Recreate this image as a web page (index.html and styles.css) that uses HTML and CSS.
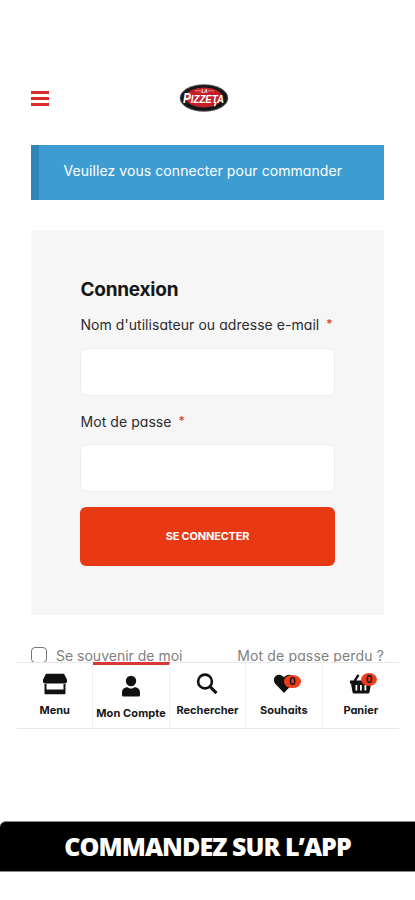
FILE: index.html
```html
<!DOCTYPE html>
<html lang="fr">
<head>
<meta charset="utf-8">
<meta name="viewport" content="width=device-width, initial-scale=1">
<title>Connexion</title>
<link rel="stylesheet" href="styles.css">
</head>
<body>
<div class="screen">
  <header class="header">
    <button class="burger" aria-label="Ouvrir"><span></span><span></span><span></span></button>
    <svg class="logo" viewBox="0 0 50 28">
      <ellipse cx="25" cy="14" rx="24.3" ry="13.8" fill="#555"/>
      <ellipse cx="25" cy="14" rx="23.300" ry="12.8" fill="#151515"/>
      <ellipse cx="25" cy="13.500" rx="18.500" ry="10" fill="#c4202a"/>
      <path d="M16 6.800h6M29 6.800h6" stroke="#e9a0a0" stroke-width=".8"/>
      <text class="logo-small" x="25.5" y="8.6" text-anchor="middle">LA</text>
      <text class="logo-name" x="4" y="19" textLength="41" lengthAdjust="spacingAndGlyphs"><tspan class="logo-initial">P</tspan>IZZETA</text>
      <path d="M37 18l-1.500 4.300" stroke="#fff" stroke-width="1.500"/>
    </svg>
  </header>
  <p class="notice"><span>Veuillez vous connecter pour commander</span></p>
  <form class="card">
    <h1>Connexion</h1>
    <label for="user"><span class="user-label">Nom d'utilisateur ou adresse e-mail</span><b>*</b></label>
    <input id="user" type="text">
    <label class="second" for="pass"><span class="pass-label">Mot de passe</span><b>*</b></label>
    <input id="pass" type="password">
    <button type="button" class="submit"><span>SE CONNECTER</span></button>
  </form>
  <div class="options">
    <span class="remember"><i class="check"></i><span class="remember-text">Se souvenir de moi</span></span>
    <a class="lost">Mot de passe perdu ?</a>
  </div>
  <nav class="tabs">
    <a class="tab">
      <svg viewBox="0 0 26 22"><path d="M4 .8h18l3 5.700V8.500Q25 10.500 23 10.500H3Q1 10.500 1 8.500V6.500z"/><path d="M2.500 11h2v5.500h17V11h2v9.500q0 .8-.8.8H3.300q-.8 0-.8-.8z"/></svg>
      <span class="t-menu">Menu</span>
    </a>
    <a class="tab active">
      <svg viewBox="0 0 26 22"><circle cx="13" cy="6" r="5.200"/><path d="M4 20v-2c0-3.500 2-5.700 5.300-5.700 1.400.9 2.500 1.200 3.700 1.200s2.300-.3 3.700-1.200c3.300 0 5.300 2.200 5.300 5.700v2q0 1.500-1.500 1.500h-15Q4 21.500 4 20z"/></svg>
      <span class="t-account">Mon Compte</span>
    </a>
    <a class="tab">
      <svg viewBox="0 0 26 22"><circle cx="11" cy="8.500" r="6.900" fill="none" stroke="#111" stroke-width="2.600"/><path d="M15.800 13.400l6.700 6.700" fill="none" stroke="#111" stroke-width="3"/></svg>
      <span class="t-search">Rechercher</span>
    </a>
    <a class="tab">
      <svg viewBox="0 0 26 22"><path d="M13 20L4.900 11.500C2.300 8.700 2.300 5 4.700 3c2.500-2.100 6-1.500 8.300 1.200 2.300-2.700 5.800-3.300 8.300-1.200 2.400 2 2.400 5.700-.2 8.500z"/></svg>
      <em class="badge">0</em>
      <span class="t-wish">Souhaits</span>
    </a>
    <a class="tab">
      <svg viewBox="0 0 26 22"><path fill-rule="evenodd" d="M2 7.500h3.500L9.500 1.200l2 1.200L8.300 7.500H24v3h-1l-1.500 8.700q-.3 1.300-1.500 1.300H6q-1.200 0-1.500-1.300L3 10.500H2zM7.500 12v5.500h1.800V12zm4.500 0v5.500h1.800V12zm4.500 0v5.500h1.800V12z"/></svg>
      <em class="badge cart">0</em>
      <span class="t-cart">Panier</span>
    </a>
  </nav>
  <footer class="banner"><span>COMMANDEZ SUR L’APP</span></footer>
</div>
</body>
</html>
```
FILE: styles.css
```css
* { box-sizing: border-box; }
body {
  margin: 0;
  background: #fff;
  color: #161616;
  font-family: Inter, "Open Sans", sans-serif;
  font-feature-settings: "cv11" 1;
}
.screen { height: 900px; overflow: hidden; display: flex; flex-direction: column; }
.screen span { white-space: nowrap; }
.header {
  height: 145px;
  flex: none;
  padding: 84px 32px 0 31px;
  display: grid;
  grid-template-columns: 147.5px 50px 1fr;
  align-items: start;
}
.burger {
  width: 18px;
  margin-top: 7px;
  padding: 0;
  border: 0;
  background: none;
  display: grid;
  gap: 3.5px;
}
.burger span { height: 2.7px; background: #d92c2c; }
.logo { width: 50px; height: 28px; overflow: visible; }
.logo text { font-family: "Liberation Sans", sans-serif; font-weight: 700; font-style: italic; fill: #fff; }
.logo .logo-small { font-size: 4.5px; }
.logo .logo-name { font-size: 11.5px; }
.logo .logo-initial { font-size: 14px; }
.notice {
  margin: 0 31px;
  height: 55px;
  flex: none;
  padding-left: 24.5px;
  border-left: 8px solid #2f85b5;
  background: #3d9cd2;
  color: #fff;
  font-size: 14px;
  line-height: 52px;
}
.notice span { letter-spacing: .07px; }
.card {
  margin: 30px 31px 0;
  height: 385px;
  flex: none;
  padding: 48px 49px 0;
  background: #f6f6f6;
}
h1 { margin: 0; padding-left: .5px; font-size: 19px; line-height: 23px; font-weight: 700; letter-spacing: -.25px; }
label { display: flex; gap: 7px; height: 47px; padding: 13px 0 0 .5px; font-size: 14px; line-height: 22px; color: #2c2c2c; }
label.second { padding-top: 14px; }
label b { color: #e63c1a; font-size: 12px; font-weight: 500; line-height: 20px; }
.user-label { letter-spacing: .05px; }
.pass-label { letter-spacing: .06px; }
input {
  display: block;
  width: 255px;
  height: 48px;
  margin: 0 0 1px;
  border: 1px solid #ececec;
  border-radius: 7px;
  background: #fff;
}
.submit {
  width: 255px;
  height: 59px;
  margin-top: 14px;
  padding: 0 0 1px;
  border: 0;
  border-radius: 6px;
  background: #e83914;
  color: #fff;
  font: 700 11px Inter, sans-serif;
  letter-spacing: -.2px;
}
.options {
  height: 47px;
  flex: none;
  padding: 32px 31px 0;
  display: flex;
  justify-content: space-between;
  color: #808080;
  font-size: 14px;
  line-height: 18px;
}
.remember { display: flex; gap: 9px; }
.check { width: 16px; height: 16px; border: 1px solid #777; border-radius: 4px; }
.lost { letter-spacing: .14px; }
.tabs {
  position: relative;
  height: 67px;
  flex: none;
  margin: 0 16px 0 17px;
  background: #fff;
  border: solid #e8e8e8;
  border-width: 1px 0;
  display: grid;
  grid-template-columns: repeat(5, 1fr);
}
.tab {
  position: relative;
  padding-top: 10px;
  border-right: 1px solid #f0f0f0;
  display: flex;
  flex-direction: column;
  align-items: center;
  font-size: 11px;
  line-height: 14px;
  font-weight: 700;
}
.tab:last-child { border-right: 0; }
.tab svg { width: 26px; height: 22px; margin-bottom: 8px; fill: #111; }
.active { margin-top: -1px; border-top: 3px solid #da3838; padding-top: 11px; }
.active svg { margin-top: -1px; margin-bottom: 9px; }
.t-account { letter-spacing: .1px; }
.badge {
  position: absolute;
  top: 12px;
  left: 37.5px;
  width: 17.5px;
  height: 13px;
  border-radius: 50%;
  background: #ee3d1b;
  text-align: center;
  font-size: 10px;
  font-style: normal;
  line-height: 13px;
}
.cart { top: 10px; left: 38.5px; width: 16px; }
.banner {
  height: 51px;
  flex: none;
  margin-top: 92px;
  background: #000;
  border: solid #888;
  border-width: 1px 0;
  border-radius: 6px 0 0 0;
  color: #fff;
  text-align: center;
  font: 800 25px/49px "Open Sans", sans-serif;
}
.banner span { letter-spacing: -.95px; }
```
